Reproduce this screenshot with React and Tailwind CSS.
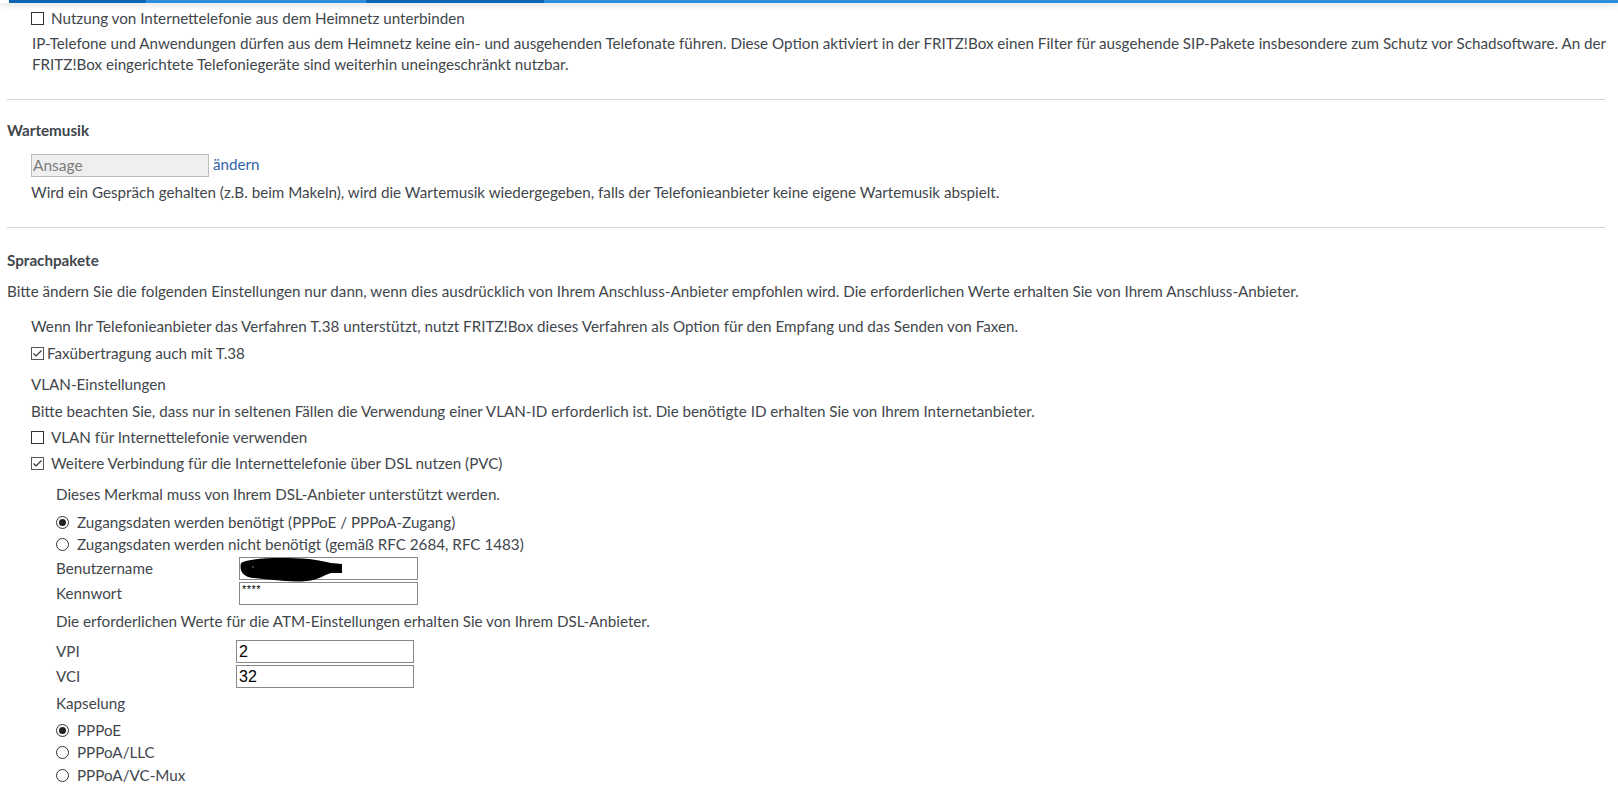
import React from 'react'

const font = { fontFamily: '"Source Sans Pro", Lato, "Liberation Sans", sans-serif' }

function Box({ checked }) {
  if (checked) {
    return (
      <svg width="13" height="13" viewBox="0 0 13 13" className="shrink-0">
        <rect x="0.5" y="0.5" width="12" height="12" fill="#fff" stroke="#555" />
        <polyline points="2.5,6.5 5,9 10.5,3.5" fill="none" stroke="#333" strokeWidth="1.2" />
      </svg>
    )
  }
  return <span className="block w-[13px] h-[13px] shrink-0 border-[1.5px] border-[#333] bg-white" />
}

function Radio({ checked }) {
  return (
    <span className="flex w-[13px] h-[13px] shrink-0 items-center justify-center rounded-full border border-[#333] bg-white">
      {checked && <span className="block w-[7px] h-[7px] rounded-full bg-[#222]" />}
    </span>
  )
}

function Line({ className = '', children }) {
  return <div className={'h-[21px] flex items-center whitespace-nowrap ' + className}>{children}</div>
}

function Field({ label, value, labelW, inputW, children }) {
  return (
    <div className="h-[23px] flex items-center">
      <span className={'whitespace-nowrap ' + labelW}>{label}</span>
      <div className={'relative h-[23px] border border-[#888] bg-white ' + inputW}>
        {children}
        {value && <span className="absolute left-[2px] top-[1px] text-[16px] leading-[20px] text-black" style={{ fontFamily: '"Liberation Sans", sans-serif' }}>{value}</span>}
      </div>
    </div>
  )
}

export default function App() {
  return (
    <div className="min-h-screen bg-white text-[15.2px] text-[#3f464c]" style={font}>
      <div className="flex h-[3px] shadow-[0_2px_6px_rgba(0,0,0,0.18)]">
        <div className="w-[9px] bg-white" />
        <div className="w-[137px] bg-[#0b64b2]" />
        <div className="w-[220px] bg-[#2d8cdb]" />
        <div className="w-[178px] bg-[#0b64b2]" />
        <div className="flex-1 bg-[#2d8cdb]" />
      </div>

      <div className="pl-[7px] pr-[13px]">
        <Line className="mt-[5px] pl-[24px]">
          <Box />
          <span className="ml-[7px]">Nutzung von Internettelefonie aus dem Heimnetz unterbinden</span>
        </Line>
        <div className="mt-[4px] pl-[25px] leading-[21px]">
          <div className="whitespace-nowrap">IP-Telefone und Anwendungen dürfen aus dem Heimnetz keine ein- und ausgehenden Telefonate führen. Diese Option aktiviert in der FRITZ!Box einen Filter für ausgehende SIP-Pakete insbesondere zum Schutz vor Schadsoftware. An der</div>
          <div className="whitespace-nowrap">FRITZ!Box eingerichtete Telefoniegeräte sind weiterhin uneingeschränkt nutzbar.</div>
        </div>

        <hr className="mt-[24px] border-t border-[#d4d4d4]" />

        <Line className="mt-[20px] font-bold">Wartemusik</Line>
        <div className="mt-[13px] pl-[24px] h-[23px] flex items-center">
          <div className="w-[178px] h-[23px] border border-[#bdbdbd] bg-[#efefef] pl-[1px] flex items-center text-[#7b7b7b] text-[15.5px]">Ansage</div>
          <span className="ml-[4px] -mt-[2px] text-[#2f62a8]">ändern</span>
        </div>
        <Line className="mt-[5px] pl-[24px]">Wird ein Gespräch gehalten (z.B. beim Makeln), wird die Wartemusik wiedergegeben, falls der Telefonieanbieter keine eigene Wartemusik abspielt.</Line>

        <hr className="mt-[24px] border-t border-[#d4d4d4]" />

        <Line className="mt-[22px] font-bold">Sprachpakete</Line>
        <Line className="mt-[10px]">Bitte ändern Sie die folgenden Einstellungen nur dann, wenn dies ausdrücklich von Ihrem Anschluss-Anbieter empfohlen wird. Die erforderlichen Werte erhalten Sie von Ihrem Anschluss-Anbieter.</Line>

        <div className="pl-[24px]">
          <Line className="mt-[14px]">Wenn Ihr Telefonieanbieter das Verfahren T.38 unterstützt, nutzt FRITZ!Box dieses Verfahren als Option für den Empfang und das Senden von Faxen.</Line>
          <Line className="mt-[6px]">
            <Box checked />
            <span className="ml-[3px]">Faxübertragung auch mit T.38</span>
          </Line>
          <Line className="mt-[10px]">VLAN-Einstellungen</Line>
          <Line className="mt-[6px]">Bitte beachten Sie, dass nur in seltenen Fällen die Verwendung einer VLAN-ID erforderlich ist. Die benötigte ID erhalten Sie von Ihrem Internetanbieter.</Line>
          <Line className="mt-[5px]">
            <Box />
            <span className="ml-[7px]">VLAN für Internettelefonie verwenden</span>
          </Line>
          <Line className="mt-[5px]">
            <Box checked />
            <span className="ml-[7px]">Weitere Verbindung für die Internettelefonie über DSL nutzen (PVC)</span>
          </Line>

          <div className="pl-[25px]">
            <Line className="mt-[10px]">Dieses Merkmal muss von Ihrem DSL-Anbieter unterstützt werden.</Line>
            <div className="mt-[6px] h-[22px] flex items-center gap-[8px] whitespace-nowrap">
              <Radio checked />
              <span>Zugangsdaten werden benötigt (PPPoE / PPPoA-Zugang)</span>
            </div>
            <div className="h-[22px] flex items-center gap-[8px] whitespace-nowrap">
              <Radio />
              <span>Zugangsdaten werden nicht benötigt (gemäß RFC 2684, RFC 1483)</span>
            </div>

            <div className="mt-[2px]">
              <Field label="Benutzername" labelW="w-[183px]" inputW="w-[179px]">
                <svg width="104" height="28" viewBox="0 0 104 28" className="absolute -left-[1px] -top-[1px]">
                  <path d="M2 6 C10 1 40 0 70 2 C80 3 86 5 92 6 L103 7 L103 16 L92 16 C84 18 80 23 68 24 C50 26 30 22 14 21 C4 20 0 14 2 6 Z" fill="#000" />
                  <circle cx="14" cy="10" r="0.8" fill="#888" />
                </svg>
              </Field>
            </div>
            <div className="mt-[2px]">
              <Field label="Kennwort" labelW="w-[183px]" inputW="w-[179px]">
                <span className="absolute left-[2px] top-[0px] text-[11px] leading-[12px] text-black tracking-[0.5px]" style={{ fontFamily: '"Liberation Sans", sans-serif' }}>****</span>
              </Field>
            </div>

            <Line className="mt-[6px]">Die erforderlichen Werte für die ATM-Einstellungen erhalten Sie von Ihrem DSL-Anbieter.</Line>
            <div className="mt-[8px]">
              <Field label="VPI" value="2" labelW="w-[180px]" inputW="w-[178px]" />
            </div>
            <div className="mt-[2px]">
              <Field label="VCI" value="32" labelW="w-[180px]" inputW="w-[178px]" />
            </div>

            <Line className="mt-[5px]">Kapselung</Line>
            <div className="mt-[5px] h-[22px] flex items-center gap-[8px]">
              <Radio checked />
              <span>PPPoE</span>
            </div>
            <div className="h-[23px] flex items-center gap-[8px]">
              <Radio />
              <span>PPPoA/LLC</span>
            </div>
            <div className="h-[22px] flex items-center gap-[8px]">
              <Radio />
              <span>PPPoA/VC-Mux</span>
            </div>
          </div>
        </div>
      </div>
    </div>
  )
}
